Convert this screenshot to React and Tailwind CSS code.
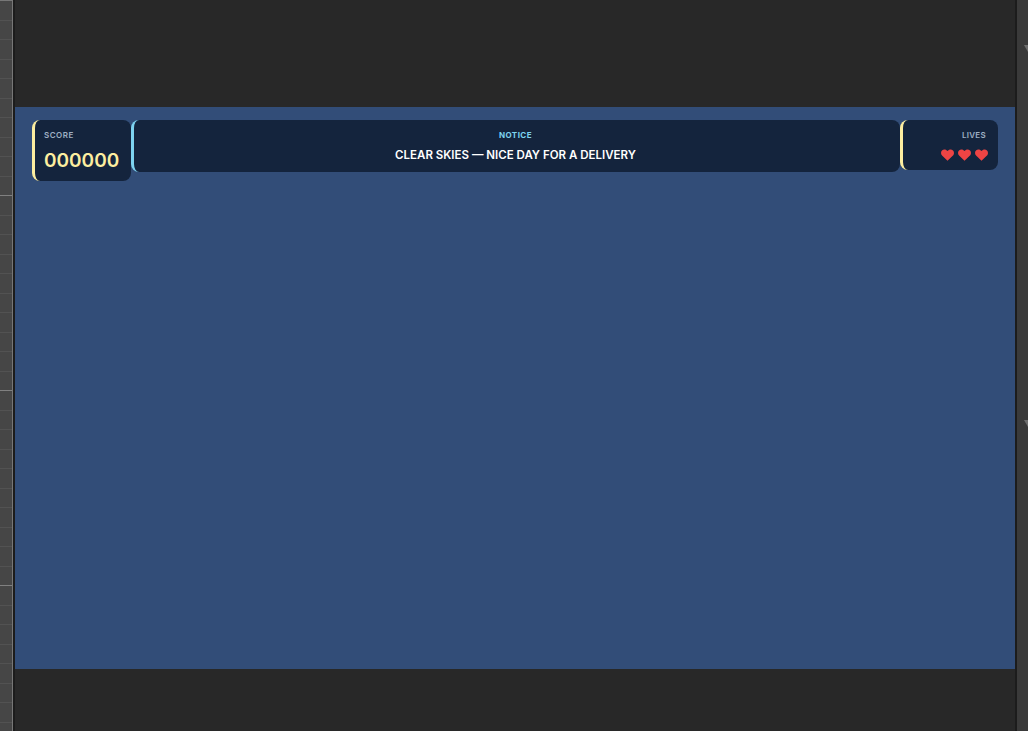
import React from "react";

const rulerTicks = Array.from({ length: 38 }, (_, i) => i);

function Heart() {
  return (
    <svg width="13" height="12" viewBox="0 0 26 24" className="block">
      <path d="M13 23.5 2.6 13.6C-.8 10.3-.6 5.6 2 3 5 .1 10.2.4 13 4.2 15.8.4 21 .1 24 3c2.6 2.6 2.8 7.3-.6 10.6L13 23.5z" fill="#ef4444" />
    </svg>
  );
}

function Marker() {
  return (
    <svg width="11" height="8" viewBox="0 0 11 8" className="block">
      <path d="M7 1h4v7z" fill="#6e6e6e" />
    </svg>
  );
}

export default function App() {
  return (
    <div className="flex h-[731px] w-[1028px] overflow-hidden bg-[#282828] font-['Inter',sans-serif]">
      {/* left ruler */}
      <div className="flex h-full w-[13px] shrink-0 flex-col border-r border-[#777] bg-[#464646]">
        <div className="h-[1px] shrink-0 bg-[#777]" />
        {rulerTicks.map((i) => (
          <div
            key={i}
            className={
              (i + 1) % 10 === 0
                ? "h-[19.5px] shrink-0 border-b border-[#808080]"
                : "h-[19.5px] shrink-0 border-b border-[#525252]"
            }
          />
        ))}
      </div>
      <div className="w-[2px] shrink-0 bg-[#1c1c1c]" />

      {/* stage */}
      <div className="flex h-full w-[1000px] shrink-0 flex-col">
        <div className="h-[107px] shrink-0 bg-[#282828]" />
        <div className="h-[562px] shrink-0 bg-[#324d78] pl-[17px] pr-[17px] pt-[13px]">
          <div className="flex items-start">
            <div className="h-[61px] w-[99px] shrink-0 rounded-[8px] border-l-[3px] border-[#fdeea0] bg-[#14243d] pl-[9px] pt-[10px]">
              <div className="text-[8px] font-semibold leading-[10px] tracking-[0.5px] text-[#9fb0c4]">SCORE</div>
              <div className="mt-[8px] text-[19px] font-semibold leading-[26px] text-[#fdeea0]">000000</div>
            </div>
            <div className="h-[52px] flex-1 rounded-[8px] border-l-[3px] border-[#7dd3f0] bg-[#14243d] pr-[3px] pt-[10px] text-center">
              <div className="text-[8px] font-bold leading-[10px] tracking-[0.45px] text-[#7dd3f0]">NOTICE</div>
              <div className="mt-[7px] text-[11.5px] font-semibold leading-[16px] text-white">CLEAR SKIES — NICE DAY FOR A DELIVERY</div>
            </div>
            <div className="flex h-[50px] w-[98px] shrink-0 flex-col items-end rounded-[8px] border-l-[3px] border-[#fdeea0] bg-[#14243d] pr-[12px] pt-[10px]">
              <div className="text-[8px] font-semibold leading-[10px] tracking-[0.3px] text-[#9fb0c4]">LIVES</div>
              <div className="mr-[-2px] mt-[9px] flex gap-[4px]">
                <Heart />
                <Heart />
                <Heart />
              </div>
            </div>
          </div>
        </div>
        <div className="flex-1 bg-[#282828]" />
      </div>

      {/* right strip */}
      <div className="w-[2px] shrink-0 bg-[#1c1c1c]" />
      <div className="flex h-full flex-1 flex-col gap-[367px] bg-[#3a3a3a] pt-[44px]">
        <Marker />
        <Marker />
      </div>
    </div>
  );
}
